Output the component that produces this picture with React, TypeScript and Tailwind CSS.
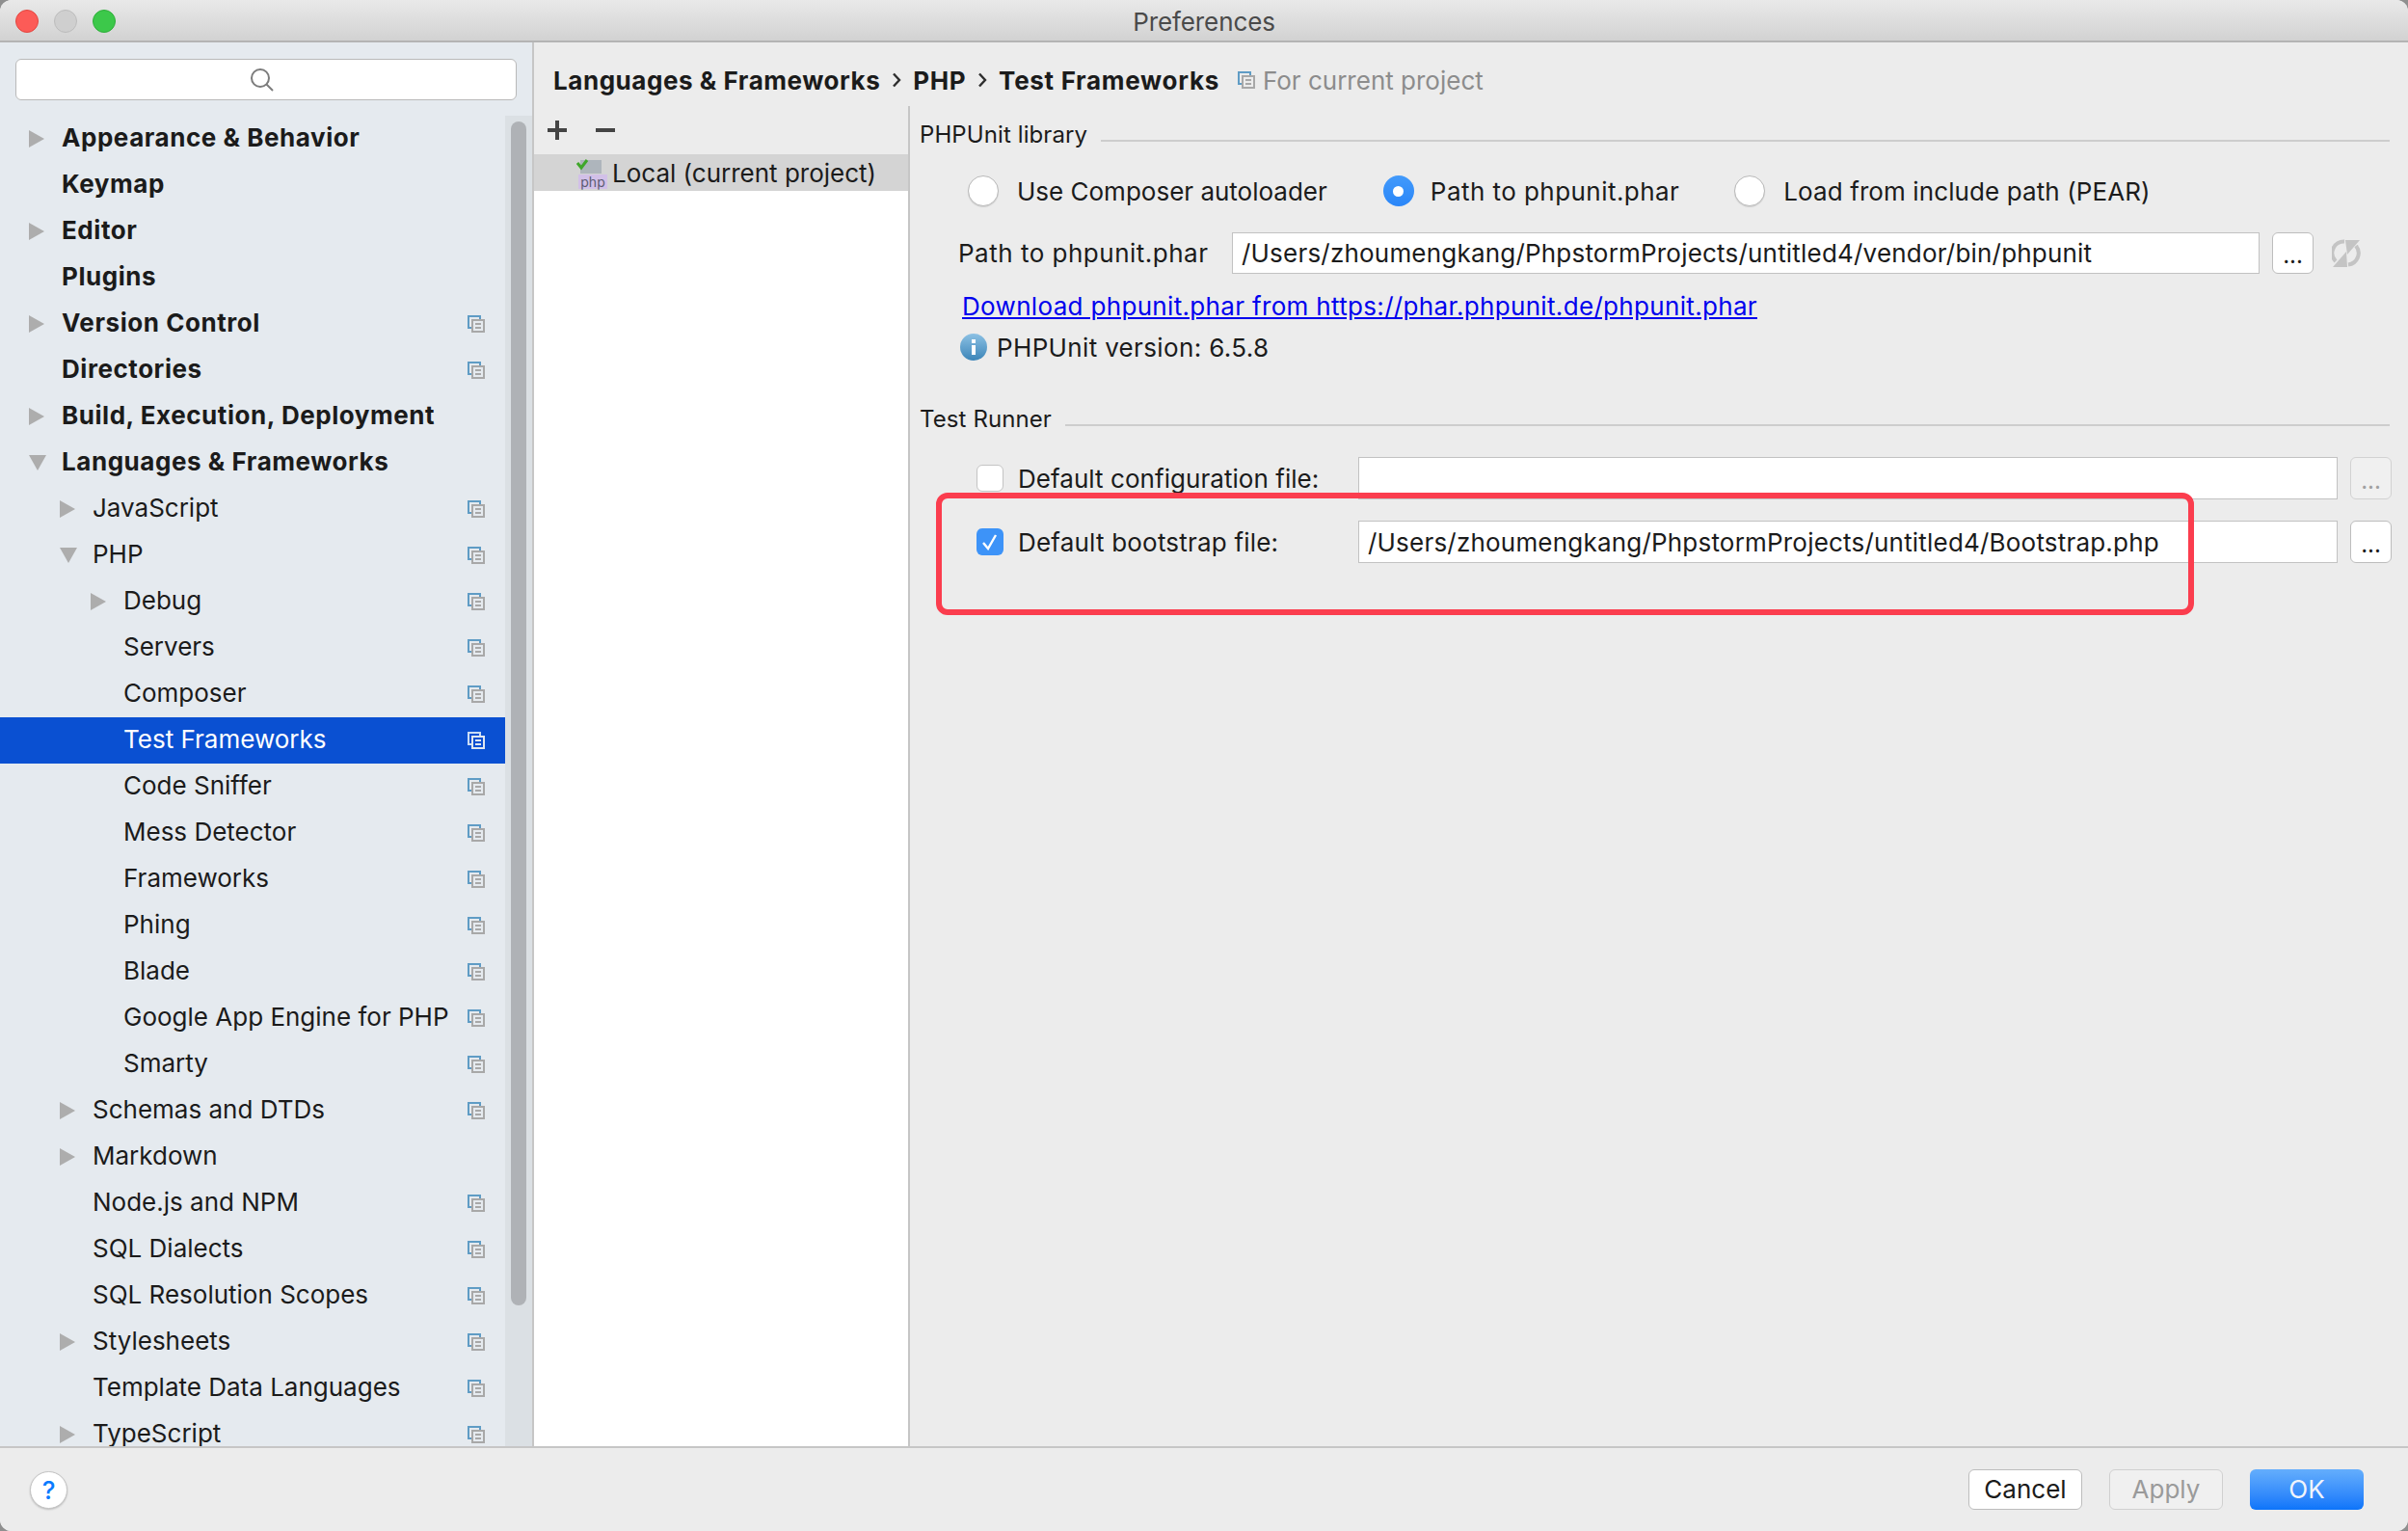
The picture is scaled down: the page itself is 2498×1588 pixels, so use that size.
import React from "react";

type Row = { label: string; level: number; arrow?: "right" | "down"; bold?: boolean; copy?: boolean; selected?: boolean };

const rows: Row[] = [
  { label: "Appearance & Behavior", level: 0, arrow: "right", bold: true },
  { label: "Keymap", level: 0, bold: true },
  { label: "Editor", level: 0, arrow: "right", bold: true },
  { label: "Plugins", level: 0, bold: true },
  { label: "Version Control", level: 0, arrow: "right", bold: true, copy: true },
  { label: "Directories", level: 0, bold: true, copy: true },
  { label: "Build, Execution, Deployment", level: 0, arrow: "right", bold: true },
  { label: "Languages & Frameworks", level: 0, arrow: "down", bold: true },
  { label: "JavaScript", level: 1, arrow: "right", copy: true },
  { label: "PHP", level: 1, arrow: "down", copy: true },
  { label: "Debug", level: 2, arrow: "right", copy: true },
  { label: "Servers", level: 2, copy: true },
  { label: "Composer", level: 2, copy: true },
  { label: "Test Frameworks", level: 2, copy: true, selected: true },
  { label: "Code Sniffer", level: 2, copy: true },
  { label: "Mess Detector", level: 2, copy: true },
  { label: "Frameworks", level: 2, copy: true },
  { label: "Phing", level: 2, copy: true },
  { label: "Blade", level: 2, copy: true },
  { label: "Google App Engine for PHP", level: 2, copy: true },
  { label: "Smarty", level: 2, copy: true },
  { label: "Schemas and DTDs", level: 1, arrow: "right", copy: true },
  { label: "Markdown", level: 1, arrow: "right" },
  { label: "Node.js and NPM", level: 1, copy: true },
  { label: "SQL Dialects", level: 1, copy: true },
  { label: "SQL Resolution Scopes", level: 1, copy: true },
  { label: "Stylesheets", level: 1, arrow: "right", copy: true },
  { label: "Template Data Languages", level: 1, copy: true },
  { label: "TypeScript", level: 1, arrow: "right", copy: true },
];

function CopyIcon({ selected, bg }: { selected?: boolean; bg: string }) {
  const a = selected ? "#c9dcf5" : "#5f9cc5";
  const b = selected ? "#dfe6f0" : "#a8a8a8";
  return (
    <svg width="18" height="18" viewBox="0 0 18 18" className="block shrink-0">
      <rect x="1" y="1" width="12" height="12" fill="none" stroke={a} strokeWidth="2" />
      <rect x="5" y="5" width="12" height="12" fill={bg} stroke={b} strokeWidth="2" />
      <path d="M8 9h6M8 13h6" stroke={b} strokeWidth="2" />
    </svg>
  );
}

function Arrow({ dir }: { dir: "right" | "down" }) {
  return dir === "right" ? (
    <svg width="16" height="18" viewBox="0 0 16 18"><path d="M0 0L16 9L0 18Z" fill="#adadad" /></svg>
  ) : (
    <svg width="18" height="16" viewBox="0 0 18 16"><path d="M0 0H18L9 16Z" fill="#adadad" /></svg>
  );
}

function TreeRow({ r }: { r: Row }) {
  const pad = r.level === 0 ? "pl-[30px]" : r.level === 1 ? "pl-[62px]" : "pl-[94px]";
  return (
    <div className={`flex h-[48px] shrink-0 items-center pr-[21px] ${pad} ${r.selected ? "bg-[#0a50d2] text-white" : "text-[#1b1b1b]"}`}>
      <div className="w-[34px] shrink-0">{r.arrow && <Arrow dir={r.arrow} />}</div>
      <span className={`flex-1 truncate pb-[3px] text-[26px] ${r.bold ? "font-bold tracking-[0.55px]" : "font-normal"}`}>{r.label}</span>
      {r.copy && <CopyIcon selected={r.selected} bg={r.selected ? "#0a50d2" : "#e5eaef"} />}
    </div>
  );
}

function Radio({ on }: { on?: boolean }) {
  return on ? (
    <span className="flex h-[32px] w-[32px] shrink-0 items-center justify-center rounded-full bg-gradient-to-b from-[#429afb] to-[#2a86f8]">
      <span className="block h-[11px] w-[11px] rounded-full bg-white" />
    </span>
  ) : (
    <span className="block h-[32px] w-[32px] shrink-0 rounded-full border border-[#b9b9b9] bg-white shadow-[0_1px_1px_rgba(0,0,0,0.12)]" />
  );
}

function Dots({ off }: { off?: boolean }) {
  return (
    <button className={`flex h-full w-[43px] shrink-0 items-end justify-center rounded-[6px] border pb-[6px] text-[24px] leading-[24px] ${off ? "border-[#d2d2d2] bg-[#f0f0f0] text-[#a0a0a0]" : "border-[#bdbdbd] bg-white text-[#1b1b1b]"}`}>
      ...
    </button>
  );
}

function Group({ label }: { label: string }) {
  return (
    <div className="mr-[2px] flex h-[30px] items-center gap-[14px] text-[24px] text-[#1b1b1b]">
      <span className="whitespace-nowrap tracking-[0.1px]">{label}</span>
      <div className="mt-[12px] h-[2px] flex-1 bg-[#cdcdcd]" />
    </div>
  );
}

function Chevron() {
  return (
    <svg width="10" height="16" viewBox="0 0 10 16" className="block shrink-0">
      <path d="M2 1.5l6 6.5-6 6.5" fill="none" stroke="#2e2e2e" strokeWidth="2.4" />
    </svg>
  );
}

export default function App() {
  return (
    <div className="h-[1588px] w-[2498px] overflow-hidden bg-[#8f8f8f] font-['Inter','Liberation_Sans',sans-serif]">
      <div className="flex h-full w-full flex-col overflow-hidden rounded-[12px] bg-[#ececec]">
        {/* title bar */}
        <div className="relative flex h-[44px] shrink-0 items-center justify-center border-b-2 border-[#b4b4b4] bg-gradient-to-b from-[#e9e9e9] to-[#d2d2d2] pt-[2px] text-[26px] text-[#4a4a4a]">
          <div className="absolute left-[16px] top-[10px] flex gap-[16px]">
            <span className="h-[24px] w-[24px] rounded-full border border-[#e2463f] bg-[#fc5b57]" />
            <span className="h-[24px] w-[24px] rounded-full border border-[#bcbcbc] bg-[#cfcfcf]" />
            <span className="h-[24px] w-[24px] rounded-full border border-[#2fae3a] bg-[#3cc84a]" />
          </div>
          <span className="tracking-[-0.1px]">Preferences</span>
        </div>

        {/* body */}
        <div className="flex min-h-0 flex-1">
          {/* sidebar */}
          <aside className="flex w-[554px] shrink-0 flex-col border-r-2 border-[#c6c6c6] bg-[#e5eaef]">
            <div className="h-[76px] shrink-0 px-[16px] pt-[17px]">
              <div className="flex h-[43px] w-[520px] items-center justify-center rounded-[6px] border border-[#b9b9b9] bg-white pr-[8px]">
                <svg width="26" height="26" viewBox="0 0 26 26" fill="none" stroke="#7c7c7c" strokeWidth="2">
                  <circle cx="11" cy="11" r="9" />
                  <path d="M17.5 17.5L24 24" />
                </svg>
              </div>
            </div>
            <div className="flex min-h-0 flex-1">
              <div className="flex min-w-0 flex-1 flex-col overflow-hidden">
                {rows.map((r) => (
                  <TreeRow key={r.label} r={r} />
                ))}
              </div>
              <div className="w-[28px] shrink-0 bg-[#dbe0e4] pl-[6px] pt-[6px]">
                <div className="h-[1228px] w-[16px] rounded-full bg-[#afb2b6]" />
              </div>
            </div>
          </aside>

          {/* main */}
          <main className="flex min-w-0 flex-1 flex-col">
            <div className="flex h-[66px] shrink-0 items-center pl-[20px] pt-[12px]">
              <span className="text-[26px] font-bold tracking-[0.55px] text-[#1b1b1b]">Languages &amp; Frameworks</span>
              <span className="mx-[12px]"><Chevron /></span>
              <span className="text-[26px] font-bold tracking-[0.55px] text-[#1b1b1b]">PHP</span>
              <span className="mx-[12px]"><Chevron /></span>
              <span className="text-[26px] font-bold tracking-[0.7px] text-[#1b1b1b]">Test Frameworks</span>
              <span className="ml-[19px] mr-[8px]"><CopyIcon bg="#ececec" /></span>
              <span className="text-[26px] text-[#8c8c8c]">For current project</span>
            </div>

            <div className="flex min-h-0 flex-1">
              {/* middle list */}
              <div className="flex w-[390px] shrink-0 flex-col border-r-2 border-[#c6c6c6] bg-white">
                <div className="flex h-[50px] shrink-0 items-center gap-[30px] bg-[#ececec] pl-[14px]">
                  <svg width="20" height="20" viewBox="0 0 20 20"><path d="M10 0v20M0 10h20" stroke="#444" strokeWidth="4" /></svg>
                  <svg width="20" height="20" viewBox="0 0 20 20"><path d="M0 10h20" stroke="#444" strokeWidth="4" /></svg>
                </div>
                <div className="flex h-[38px] shrink-0 items-center bg-[#d4d4d4] pl-[44px]">
                  <div className="relative h-[34px] w-[37px] shrink-0">
                    <svg width="32" height="20" viewBox="0 0 32 20" className="absolute left-0 top-[1px]">
                      <rect x="4" y="3" width="22" height="14" fill="#aeb5bc" />
                      <path d="M1 6l4 5 6-8" fill="none" stroke="#3fa72a" strokeWidth="3" />
                    </svg>
                    <span className="absolute bottom-0 left-[2px] h-[15px] w-[30px] bg-[#d2c0e8] text-center text-[14px] leading-[15px] text-[#5b5b72]">php</span>
                  </div>
                  <span className="text-[26px] text-[#1b1b1b]">Local (current project)</span>
                </div>
              </div>

              {/* right form */}
              <div className="relative min-w-0 flex-1 pl-[10px] pr-[17px] pt-[15px] text-[26px] text-[#1b1b1b]">
                <Group label="PHPUnit library" />
                <div className="mt-[27px] flex h-[32px] items-center pl-[50px]">
                  <Radio />
                  <span className="ml-[19px] whitespace-nowrap">Use Composer autoloader</span>
                  <span className="ml-[58px]"><Radio on /></span>
                  <span className="ml-[17px] whitespace-nowrap tracking-[0.45px]">Path to phpunit.phar</span>
                  <span className="ml-[57px]"><Radio /></span>
                  <span className="ml-[19px] whitespace-nowrap tracking-[0.1px]">Load from include path (PEAR)</span>
                </div>
                <div className="mt-[27px] flex h-[43px] items-center pl-[40px]">
                  <span className="w-[284px] shrink-0 whitespace-nowrap tracking-[0.5px]">Path to phpunit.phar</span>
                  <div className="flex h-full w-[1066px] items-center border border-[#c2c2c2] bg-white pl-[9px] tracking-[0.2px]">/Users/zhoumengkang/PhpstormProjects/untitled4/vendor/bin/phpunit</div>
                  <span className="ml-[13px] h-full"><Dots /></span>
                  <svg width="30" height="30" viewBox="0 0 30 30" className="ml-[19px] shrink-0" fill="none" stroke="#c4c4c4" strokeWidth="4">
                    <path d="M13 2.5A12 12 0 0 0 4 23" />
                    <path d="M25 7A12 12 0 0 1 17 26.5" />
                    <path d="M14 1H29L16 16ZM1 29H16L15 13Z" fill="#c4c4c4" stroke="none" />
                  </svg>
                </div>
                <div className="mt-[17px] flex h-[32px] items-center pl-[44px]">
                  <a className="whitespace-nowrap tracking-[0.33px] text-[#0000ee] underline">Download phpunit.phar from https://phar.phpunit.de/phpunit.phar</a>
                </div>
                <div className="mt-[11px] flex h-[32px] items-center pl-[42px]">
                  <svg width="28" height="28" viewBox="0 0 28 28" className="shrink-0">
                    <defs>
                      <linearGradient id="inf" x1="0" y1="0" x2="0" y2="1">
                        <stop offset="0" stopColor="#8cc1e4" />
                        <stop offset="1" stopColor="#3c85b8" />
                      </linearGradient>
                    </defs>
                    <circle cx="14" cy="14" r="14" fill="url(#inf)" />
                    <rect x="12" y="6" width="4" height="4" fill="#fff" />
                    <rect x="12" y="12" width="4" height="10" fill="#fff" />
                  </svg>
                  <span className="ml-[10px] whitespace-nowrap tracking-[0.35px]">PHPUnit version: 6.5.8</span>
                </div>

                <div className="mt-[44px]"><Group label="Test Runner" /></div>

                <div className="mt-[24px] flex h-[44px] items-center pl-[59px]">
                  <span className="block h-[28px] w-[28px] shrink-0 rounded-[6px] border border-[#c4c4c4] bg-white" />
                  <span className="ml-[15px] w-[353px] shrink-0 whitespace-nowrap tracking-[0.05px]">Default configuration file:</span>
                  <div className="h-full w-[1016px] border border-[#c2c2c2] bg-white" />
                  <span className="ml-[13px] h-full"><Dots off /></span>
                </div>
                <div className="mt-[22px] flex h-[44px] items-center pl-[59px]">
                  <span className="flex h-[28px] w-[28px] shrink-0 items-center justify-center rounded-[6px] bg-[#3d93f8]">
                    <svg width="18" height="18" viewBox="0 0 18 18" fill="none" stroke="#fff" strokeWidth="2.4"><path d="M2 10l5 6L15 2" /></svg>
                  </span>
                  <span className="ml-[15px] w-[353px] shrink-0 whitespace-nowrap tracking-[0.2px]">Default bootstrap file:</span>
                  <div className="flex h-full w-[1016px] items-center border border-[#c2c2c2] bg-white pl-[9px] tracking-[0.2px]">/Users/zhoumengkang/PhpstormProjects/untitled4/Bootstrap.php</div>
                  <span className="ml-[13px] h-full"><Dots /></span>
                </div>

                {/* annotation */}
                <div className="absolute left-[27px] top-[401px] h-[127px] w-[1305px] rounded-[12px] border-[6px] border-[#fb3d4e]" />
              </div>
            </div>
          </main>
        </div>

        {/* footer */}
        <footer className="flex h-[88px] shrink-0 items-start border-t-2 border-[#c6c6c6] bg-[#ececec] pl-[31px] pr-[46px] pt-[22px]">
          <button className="mt-[2px] flex h-[39px] w-[39px] items-center justify-center rounded-full border border-[#c4c4c4] bg-white text-[26px] font-medium text-[#0a7bff] shadow-[0_1px_2px_rgba(0,0,0,0.2)]">?</button>
          <div className="flex-1" />
          <button className="h-[42px] w-[118px] rounded-[6px] border border-[#bdbdbd] bg-white pb-[2px] text-[26px] text-[#1b1b1b]">Cancel</button>
          <button className="ml-[28px] h-[42px] w-[118px] rounded-[6px] border border-[#d0d0d0] bg-[#f0f0f0] pb-[2px] text-[26px] text-[#9a9a9a]">Apply</button>
          <button className="ml-[28px] h-[42px] w-[118px] rounded-[6px] bg-gradient-to-b from-[#64aefc] to-[#0a74fa] pb-[2px] text-[26px] text-[#f0f4fb]">OK</button>
        </footer>
      </div>
    </div>
  );
}
